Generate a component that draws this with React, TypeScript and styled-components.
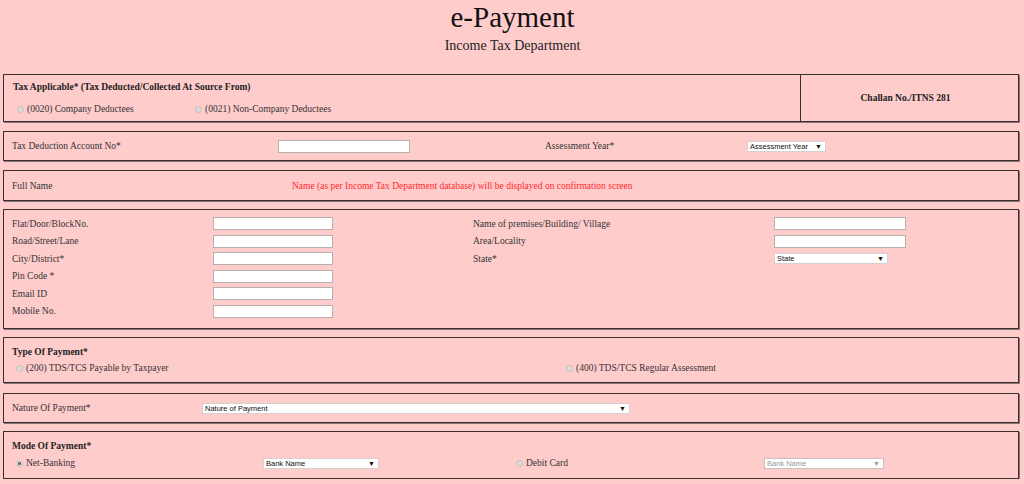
import React from "react";
import styled, { createGlobalStyle } from "styled-components";

const Global = createGlobalStyle`
  html, body { margin: 0; padding: 0; background: #ffcccc; }
  body { font-family: "Liberation Serif", "Times New Roman", serif; color: #333; }
`;

const Page = styled.div`
  padding: 0 5px 0 3px;
  display: flex;
  flex-direction: column;
`;

const Header = styled.header`
  text-align: center;
  height: 74px;
  padding-left: 3px;
`;

const Title = styled.h1`
  margin: 1px 0 0;
  font-size: 29px;
  line-height: 32px;
  font-weight: normal;
  color: #111;
`;

const Subtitle = styled.div`
  margin-top: 5px;
  font-size: 14px;
  line-height: 16px;
  color: #222;
`;

const Box = styled.section<{ $h: number; $mt?: number }>`
  box-sizing: border-box;
  height: ${(p) => p.$h}px;
  margin-top: ${(p) => p.$mt ?? 9}px;
  border: 1px solid #3a2f2f;
  box-shadow: 1px 1px 0 #8a7474;
`;

const SplitBox = styled(Box)`
  display: flex;
`;

const LeftCell = styled.div`
  flex: 1;
  padding: 5px 0 0 9px;
`;

const RightCell = styled.div`
  width: 218px;
  border-left: 1px solid #3a2f2f;
  display: flex;
  align-items: center;
  justify-content: center;
  font-weight: bold;
  font-size: 9.5px;
  padding-right: 8px;
  box-sizing: border-box;
  color: #222;
`;

const Heading = styled.div`
  font-weight: bold;
  font-size: 9.5px;
  line-height: 14px;
  color: #222;
`;

const StackBox = styled(Box)`
  padding: 7px 0 0 8px;
  display: flex;
  flex-direction: column;
`;

const Grid = styled.div<{ $cols: string; $rows?: string }>`
  display: grid;
  grid-template-columns: ${(p) => p.$cols};
  ${(p) => (p.$rows ? `grid-auto-rows: ${p.$rows};` : "")}
  align-items: center;
`;

const RowBox = styled(Box)`
  display: flex;
  align-items: center;
  padding-left: 8px;
`;

const GridBox = styled(Box)`
  padding: 5px 0 0 8px;
`;

const Label = styled.span<{ $red?: boolean }>`
  font-size: 9.5px;
  line-height: 14px;
  color: ${(p) => (p.$red ? "#ff2a2a" : "#333")};
  white-space: nowrap;
`;

const TextInput = styled.input<{ $w: number }>`
  box-sizing: border-box;
  width: ${(p) => p.$w}px;
  height: 13px;
  border: 1px solid #b8b0b0;
  background: #fff;
  padding: 0;
  margin: 0;
`;

const SelectBox = styled.div<{ $w: number; $disabled?: boolean }>`
  box-sizing: border-box;
  width: ${(p) => p.$w}px;
  height: 11px;
  background: #fff;
  border: 1px solid ${(p) => (p.$disabled ? "#c8c0c0" : "#d8d0d0")};
  display: flex;
  align-items: center;
  justify-content: space-between;
  padding: 0 3px 0 2px;
  font-family: "Liberation Sans", Arial, sans-serif;
  font-size: 7.5px;
  line-height: 9px;
  color: ${(p) => (p.$disabled ? "#999" : "#111")};
`;

const Arrow = styled.span<{ $disabled?: boolean }>`
  font-size: 7px;
  line-height: 9px;
  color: ${(p) => (p.$disabled ? "#999" : "#111")};
`;

const RadioItem = styled.label`
  display: flex;
  align-items: center;
  gap: 3px;
  font-size: 9.5px;
  line-height: 14px;
  color: #333;
  white-space: nowrap;
`;

const RadioInput = styled.input`
  appearance: none;
  margin: 0;
  width: 7px;
  height: 7px;
  border-radius: 50%;
  border: 1px solid #c4c0c0;
  background: #dedada;
  box-sizing: border-box;
  &:checked {
    background: radial-gradient(circle, #666 0 1.3px, #e2dede 1.7px);
  }
`;

const RadioRow = styled.div<{ $cols: string; $pl: number; $mt: number }>`
  display: grid;
  grid-template-columns: ${(p) => p.$cols};
  align-items: center;
  padding-left: ${(p) => p.$pl}px;
  margin-top: ${(p) => p.$mt}px;
`;

const Empty = styled.span``;

function Select({ w, text, disabled }: { w: number; text: string; disabled?: boolean }) {
  return (
    <SelectBox $w={w} $disabled={disabled}>
      <span>{text}</span>
      <Arrow $disabled={disabled}>▼</Arrow>
    </SelectBox>
  );
}

function Radio({ label, checked, name }: { label: string; checked?: boolean; name: string }) {
  return (
    <RadioItem>
      <RadioInput type="radio" name={name} defaultChecked={checked} />
      {label}
    </RadioItem>
  );
}

export default function App() {
  return (
    <>
      <Global />
      <Page>
        <Header>
          <Title>e-Payment</Title>
          <Subtitle>Income Tax Department</Subtitle>
        </Header>

        <SplitBox $h={48} $mt={0}>
          <LeftCell>
            <Heading>Tax Applicable* (Tax Deducted/Collected At Source From)</Heading>
            <RadioRow $cols="178px auto" $pl={4} $mt={8}>
              <Radio name="tax" label="(0020) Company Deductees" />
              <Radio name="tax" label="(0021) Non-Company Deductees" />
            </RadioRow>
          </LeftCell>
          <RightCell>Challan No./ITNS 281</RightCell>
        </SplitBox>

        <RowBox $h={30}>
          <Grid $cols="266px 267px 202px auto">
            <Label>Tax Deduction Account No*</Label>
            <TextInput $w={132} />
            <Label>Assessment Year*</Label>
            <Select w={79} text="Assessment Year" />
          </Grid>
        </RowBox>

        <RowBox $h={31}>
          <Grid $cols="280px auto">
            <Label>Full Name</Label>
            <Label $red>Name (as per Income Tax Department database) will be displayed on confirmation screen</Label>
          </Grid>
        </RowBox>

        <GridBox $h={120} $mt={8}>
          <Grid $cols="201px 260px 301px auto" $rows="17.5px">
            <Label>Flat/Door/BlockNo.</Label>
            <TextInput $w={120} />
            <Label>Name of premises/Building/ Village</Label>
            <TextInput $w={132} />

            <Label>Road/Street/Lane</Label>
            <TextInput $w={120} />
            <Label>Area/Locality</Label>
            <TextInput $w={132} />

            <Label>City/District*</Label>
            <TextInput $w={120} />
            <Label>State*</Label>
            <Select w={114} text="State" />

            <Label>Pin Code *</Label>
            <TextInput $w={120} />
            <Empty />
            <Empty />

            <Label>Email ID</Label>
            <TextInput $w={120} />
            <Empty />
            <Empty />

            <Label>Mobile No.</Label>
            <TextInput $w={120} />
            <Empty />
            <Empty />
          </Grid>
        </GridBox>

        <StackBox $h={46} $mt={8}>
          <Heading>Type Of Payment*</Heading>
          <RadioRow $cols="550px auto" $pl={4} $mt={2}>
            <Radio name="type" label="(200) TDS/TCS Payable by Taxpayer" />
            <Radio name="type" label="(400) TDS/TCS Regular Assessment" />
          </RadioRow>
        </StackBox>

        <RowBox $h={30} $mt={10}>
          <Grid $cols="190px auto">
            <Label>Nature Of Payment*</Label>
            <Select w={428} text="Nature of Payment" />
          </Grid>
        </RowBox>

        <StackBox $h={48} $mt={8}>
          <Heading>Mode Of Payment*</Heading>
          <RadioRow $cols="247px 253px 248px auto" $pl={4} $mt={3}>
            <Radio name="mode" label="Net-Banking" checked />
            <Select w={116} text="Bank Name" />
            <Radio name="mode" label="Debit Card" />
            <Select w={120} text="Bank Name" disabled />
          </RadioRow>
        </StackBox>
      </Page>
    </>
  );
}
